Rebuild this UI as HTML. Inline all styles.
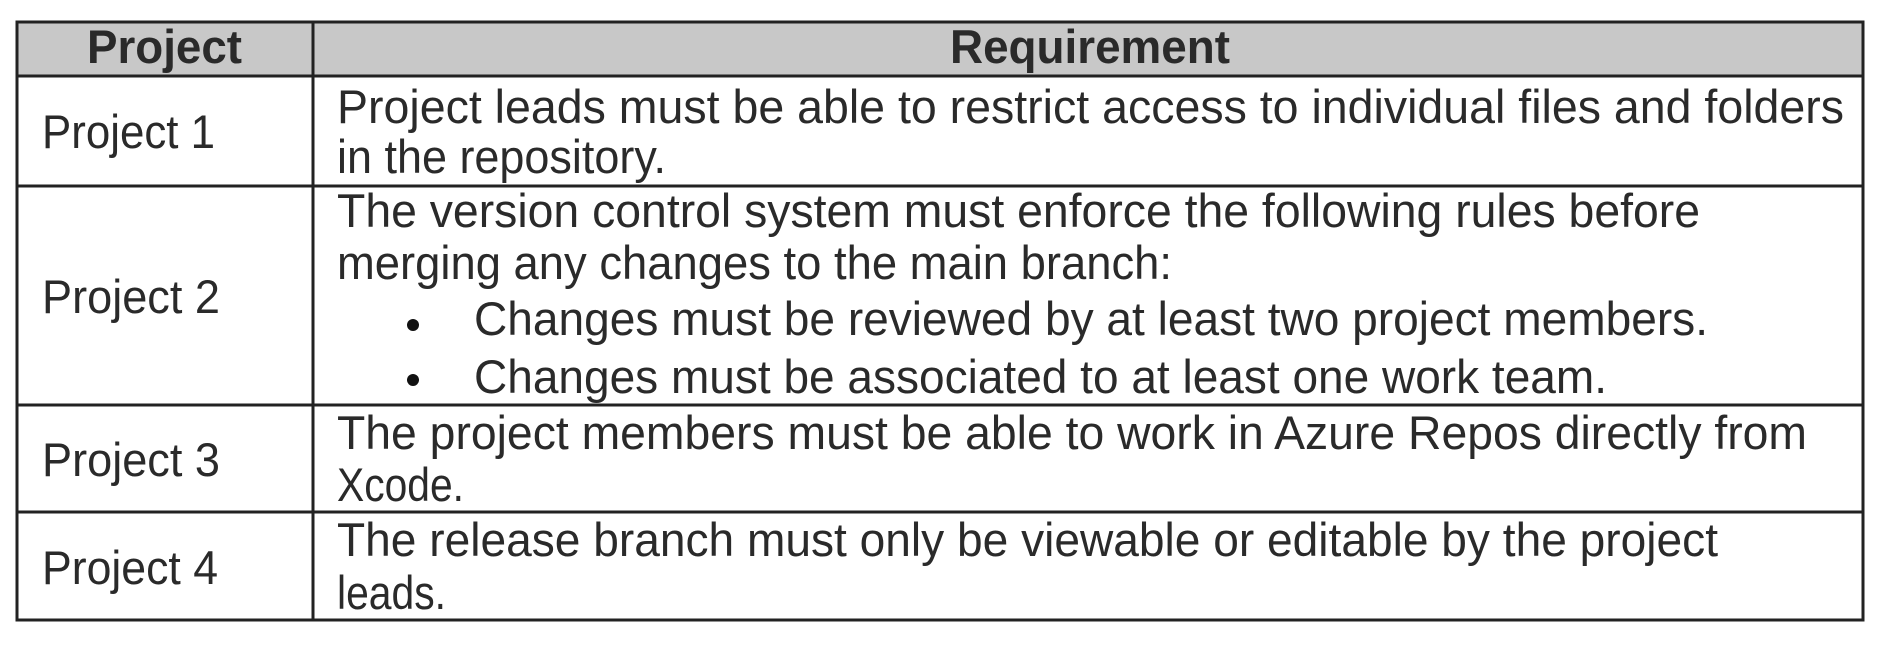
<!DOCTYPE html>
<html><head><meta charset="utf-8"><style>
html,body{margin:0;padding:0;background:#fff;width:1890px;height:654px;overflow:hidden}
svg{display:block}
text{font-family:"Liberation Sans",Arial,sans-serif;fill:#2a2a2a}
</style></head><body>
<svg width="1890" height="654" viewBox="0 0 1890 654" xmlns="http://www.w3.org/2000/svg">
<rect x="17" y="22" width="1846" height="54" fill="#c8c8c8"/>
<g stroke="#222" stroke-width="3" fill="none">
<rect x="17" y="22" width="1846" height="598"/>
<line x1="17" y1="76" x2="1863" y2="76"/>
<line x1="17" y1="186" x2="1863" y2="186"/>
<line x1="17" y1="405" x2="1863" y2="405"/>
<line x1="17" y1="512" x2="1863" y2="512"/>
<line x1="313" y1="22" x2="313" y2="620"/>
</g>
<g font-size="47">
<text x="87" y="63" font-weight="bold" fill="#111" textLength="155" lengthAdjust="spacingAndGlyphs">Project</text>
<text x="950" y="63" font-weight="bold" fill="#111" textLength="280" lengthAdjust="spacingAndGlyphs">Requirement</text>

<text x="42" y="148" textLength="173" lengthAdjust="spacingAndGlyphs">Project 1</text>
<text x="42" y="313" textLength="178" lengthAdjust="spacingAndGlyphs">Project 2</text>
<text x="42" y="476" textLength="178" lengthAdjust="spacingAndGlyphs">Project 3</text>
<text x="42" y="584" textLength="176" lengthAdjust="spacingAndGlyphs">Project 4</text>

<text x="337" y="123" textLength="1507" lengthAdjust="spacingAndGlyphs">Project leads must be able to restrict access to individual files and folders</text>
<text x="337" y="173" textLength="329" lengthAdjust="spacingAndGlyphs">in the repository.</text>

<text x="337" y="227" textLength="1363" lengthAdjust="spacingAndGlyphs">The version control system must enforce the following rules before</text>
<text x="337" y="279" textLength="835" lengthAdjust="spacingAndGlyphs">merging any changes to the main branch:</text>
<circle cx="413" cy="325" r="6" fill="#111"/>
<text x="474" y="335" textLength="1234" lengthAdjust="spacingAndGlyphs">Changes must be reviewed by at least two project members.</text>
<circle cx="413" cy="380" r="6" fill="#111"/>
<text x="474" y="393" textLength="1133" lengthAdjust="spacingAndGlyphs">Changes must be associated to at least one work team.</text>

<text x="337" y="449" textLength="1470" lengthAdjust="spacingAndGlyphs">The project members must be able to work in Azure Repos directly from</text>
<text x="337" y="501" textLength="127" lengthAdjust="spacingAndGlyphs">Xcode.</text>

<text x="337" y="556" textLength="1381" lengthAdjust="spacingAndGlyphs">The release branch must only be viewable or editable by the project</text>
<text x="337" y="609" textLength="109" lengthAdjust="spacingAndGlyphs">leads.</text>
</g>
</svg>
</body></html>
